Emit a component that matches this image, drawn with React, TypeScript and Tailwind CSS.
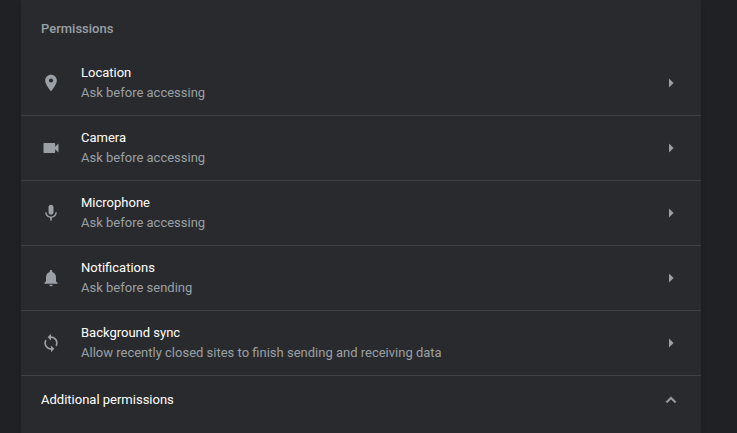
import { MdLocationOn, MdMic, MdNotifications, MdSync, MdVideocam } from 'react-icons/md'
import type { IconType } from 'react-icons'

interface Permission {
  icon: IconType
  label: string
  description: string
}

const PERMISSIONS: Permission[] = [
  { icon: MdLocationOn, label: 'Location', description: 'Ask before accessing' },
  { icon: MdVideocam, label: 'Camera', description: 'Ask before accessing' },
  { icon: MdMic, label: 'Microphone', description: 'Ask before accessing' },
  { icon: MdNotifications, label: 'Notifications', description: 'Ask before sending' },
  {
    icon: MdSync,
    label: 'Background sync',
    description: 'Allow recently closed sites to finish sending and receiving data',
  },
]

function ArrowRight() {
  return (
    <svg viewBox="0 0 20 20" fill="currentColor" aria-hidden="true" className="size-5 shrink-0 text-[#9aa0a6]">
      <path d="M8 5.6v8.8l4.6-4.4z" />
    </svg>
  )
}

function ChevronUp() {
  return (
    <svg viewBox="0 0 24 24" fill="currentColor" aria-hidden="true" className="size-5 shrink-0 text-[#9aa0a6]">
      <path
        d="M12 8l-6 6 1.41 1.41L12 10.83l4.59 4.58L18 14z"
        stroke="currentColor"
        strokeWidth="0.7"
      />
    </svg>
  )
}

function PermissionRow({ icon: Icon, label, description }: Permission) {
  return (
    <li className="border-b border-[#3f4042]">
      <button type="button" className="flex h-16 w-full items-center px-5 text-left">
        <Icon className="size-5 shrink-0 text-[#9aa0a6]" />
        <span className="ml-5 flex-1">
          <span className="block text-white">{label}</span>
          <span className="block text-[#9aa0a6]">{description}</span>
        </span>
        <ArrowRight />
      </button>
    </li>
  )
}

export default function App() {
  return (
    <div className="min-h-screen bg-[#202124] pr-9 pl-[21px] font-[Roboto,sans-serif] text-[13px] leading-5">
      <main className="min-h-screen bg-[#292a2d] shadow-md">
        <h2 className="px-5 pt-[19px] pb-3 font-medium text-[#9aa0a6]">Permissions</h2>
        <ul>
          {PERMISSIONS.map((p) => (
            <PermissionRow key={p.label} {...p} />
          ))}
        </ul>
        <button
          type="button"
          aria-expanded="true"
          className="flex h-12 w-full items-center justify-between px-5 text-white"
        >
          Additional permissions
          <ChevronUp />
        </button>
      </main>
    </div>
  )
}
